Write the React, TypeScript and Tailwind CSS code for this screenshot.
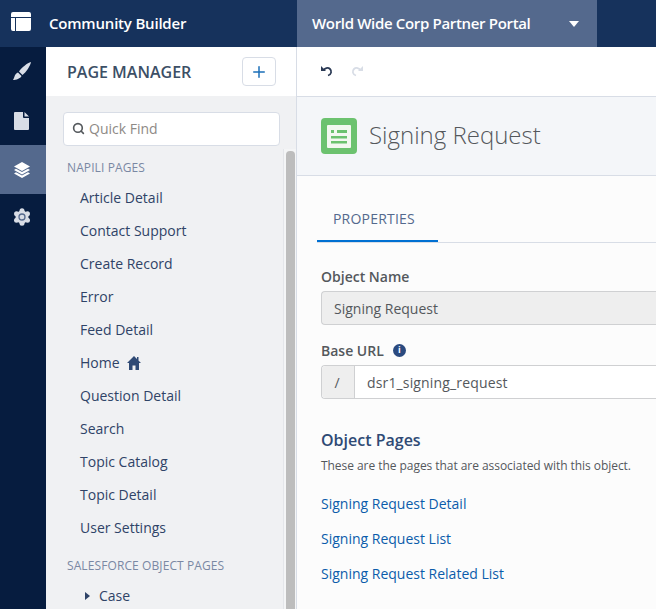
import { Plus, Search } from "lucide-react";

const napiliPages = ["Article Detail", "Contact Support", "Create Record", "Error", "Feed Detail", "Home", "Question Detail", "Search", "Topic Catalog", "Topic Detail", "User Settings"];

function Header() {
  return (
    <header className="flex h-[47px] shrink-0 bg-[#16325c] text-white">
      <div className="flex w-[49px] items-center pb-[4px] pl-[11px]">
        <svg width="20" height="19" viewBox="0 0 20 19" fill="#fff">
          <path d="M2 0h16a2 2 0 0 1 2 2v3H0V2a2 2 0 0 1 2-2zM0 6h4v13H2a2 2 0 0 1-2-2zM5 6h15v11a2 2 0 0 1-2 2H5z" />
        </svg>
      </div>
      <div className="w-[248px] self-center text-[15px] font-semibold tracking-[-0.2px]">Community Builder</div>
      <div className="flex w-[300px] items-center justify-between bg-[#54698d] pl-[15px] pr-[18px]">
        <span className="text-[15px] font-semibold tracking-[-0.33px]">World Wide Corp Partner Portal</span>
        <span className="h-0 w-0 border-x-[5px] border-t-[6px] border-x-transparent border-t-white" />
      </div>
    </header>
  );
}

function Rail() {
  return (
    <nav className="flex w-[46px] shrink-0 flex-col bg-[#061c3f]">
      <div className="flex h-[49px] items-center justify-center pb-[2px] pr-[2px]">
        <svg width="18" height="18" viewBox="0 0 18 18" fill="#d8dde6">
          <path d="M18 0C17.500 3.500 13 10.500 9.500 13L6 9.500C8.500 6 14.500 .5 18 0zM5 10.500l3.500 3.500C7.500 16.500 3 18 0 18c.5-1 1-2 1.500-3.500C2 12.500 3.500 11 5 10.500z" />
        </svg>
      </div>
      <div className="flex h-[49px] items-center justify-center pr-[3px]">
        <svg width="15" height="18" viewBox="0 0 15 18" fill="#d8dde6">
          <path d="M0 1a1 1 0 0 1 1-1h8v5a1 1 0 0 0 1 1h5v11a1 1 0 0 1-1 1H1a1 1 0 0 1-1-1zM10.500 0 15 4.600h-4.500z" />
        </svg>
      </div>
      <div className="flex h-[49px] items-center justify-center bg-[#54698d] pr-[3px]">
        <svg width="16" height="16" viewBox="0 0 16 16" fill="#fff">
          <path d="M8 0l8 4.500L8 9 0 4.500zM0 8l2-1.200L8 10l6-3.200L16 8l-8 4.500zM0 11.500l2-1.200 6 3.200 6-3.200 2 1.200L8 16z" />
        </svg>
      </div>
      <div className="flex h-[49px] items-center justify-center pb-[3px] pr-[3px]">
        <svg width="18" height="18" viewBox="0 0 18 18" fill="#d8dde6">
          <circle cx="9" cy="9" r="6.500" />
          <circle cx="9" cy="2.700" r="2.500" />
          <circle cx="9" cy="15.300" r="2.500" />
          <circle cx="3.540" cy="5.850" r="2.500" />
          <circle cx="14.460" cy="5.850" r="2.500" />
          <circle cx="3.540" cy="12.150" r="2.500" />
          <circle cx="14.460" cy="12.150" r="2.500" />
          <circle cx="9" cy="9" r="3" fill="none" stroke="#54698d" strokeWidth="1.300" />
        </svg>
      </div>
    </nav>
  );
}

function PagesPanel() {
  return (
    <aside className="flex w-[251px] shrink-0 flex-col border-r border-[#d8dde6] bg-[#f0f1f3]">
      <div className="flex h-[49px] shrink-0 items-center justify-between bg-white pl-[21px] pr-[20px]">
        <h2 className="text-[16px] font-semibold text-[#3c4f66]">PAGE MANAGER</h2>
        <button className="flex h-[29px] w-[34px] items-center justify-center rounded-[4px] border border-[#d8dde6] bg-white text-[#1b6fb8]">
          <Plus size={18} />
        </button>
      </div>
      <div className="relative min-h-0 flex-1 overflow-hidden">
        <div className="pl-[17px] pr-[16px] pt-[16px]">
          <div className="flex h-[34px] items-center gap-[4px] rounded-[4px] border border-[#d8dde6] bg-white pb-[2px] pl-[8px] text-[14px] text-[#8e8a86]">
            <Search size={13} strokeWidth={3} className="text-[#54585c]" />
            Quick Find
          </div>
        </div>
        <div className="pl-[21px] pt-[13px] text-[12px] leading-[18px] tracking-[0.1px] text-[#7a88a3]">NAPILI PAGES</div>
        <ul className="pt-[4px] text-[14px] text-[#2f4367]">
          {napiliPages.map((page) => (
            <li key={page} className="flex h-[33px] items-center gap-[7px] pl-[34px]">
              {page}
              {page === "Home" && (
                <svg width="14" height="14" viewBox="0 0 14 14" fill="#2f4a75">
                  <path d="M7 0 0 7h2v7h3.500V9.500h3V14H12V7h2l-2.500-2.500V1H10v2z" />
                </svg>
              )}
            </li>
          ))}
        </ul>
        <div className="pl-[21px] pt-[13px] text-[12px] leading-[18px] tracking-[0.1px] text-[#7a88a3]">SALESFORCE OBJECT PAGES</div>
        <div className="mt-[10px] flex items-center gap-[9px] pl-[39px] text-[14px] text-[#2f4367]">
          <span className="h-0 w-0 border-y-[4px] border-l-[5px] border-y-transparent border-l-[#2f4367]" />
          Case
        </div>
        <div className="absolute bottom-0 right-0 top-[53px] w-[13px] border-l border-[#e4e6ea] bg-[#f4f5f6] pl-[2px]">
          <div className="mt-[2px] h-full w-[9px] rounded-t-[4px] bg-[#bdbdbd]" />
        </div>
      </div>
    </aside>
  );
}

function MainPane() {
  return (
    <main className="min-w-0 flex-1 bg-[#fcfcfc]">
      <div className="flex h-[50px] items-center gap-[18px] border-b border-[#d8dde6] bg-white pb-[1px] pl-[24px]">
        <svg width="12" height="12" viewBox="0 0 12 12" fill="#2b3a55">
          <path d="M0 1v5h5z" />
          <path d="M2.500 5.500C3.500 3 7 2 9 4c2 2 1.500 5.500-2 6.500" fill="none" stroke="#2b3a55" strokeWidth="1.800" />
        </svg>
        <svg width="12" height="12" viewBox="0 0 12 12" fill="#d8dde6">
          <path d="M12 1v5H7z" />
          <path d="M9.500 5.500C8.500 3 5 2 3 4c-2 2-1.500 5.500 2 6.500" fill="none" stroke="#d8dde6" strokeWidth="1.800" />
        </svg>
      </div>
      <div className="flex h-[79px] items-center gap-[12px] border-b border-[#d8dde6] bg-[#f4f6f9] pl-[24px]">
        <div className="flex h-[36px] w-[36px] items-center justify-center rounded-[4px] bg-[#6cc26f]">
          <svg width="24" height="23" viewBox="0 0 24 23">
            <rect width="24" height="23" rx="1" fill="#f3f8f0" />
            <path d="M4 5h3v3H4zM10 5h10v3H10zM4 11h16v2.500H4zM4 16h16v2.500H4z" fill="#6cc26f" />
          </svg>
        </div>
        <h1 className="pb-[2px] text-[24px] font-light text-[#54585c]">Signing Request</h1>
      </div>
      <div className="pl-[20px] pt-[28px]">
        <div className="border-b border-[#d8dde6]">
          <div className="h-[38px] w-[121px] border-b-2 border-[#0070d2] pl-[16px] text-[14px] leading-[30px] tracking-[0.2px] text-[#54698d]">PROPERTIES</div>
        </div>
        <div className="pl-[4px]">
          <label className="mt-[24px] block text-[14px] font-semibold leading-[20px] text-[#54585c]">Object Name</label>
          <div className="mt-[4px] flex h-[34px] items-center rounded-l-[4px] border border-r-0 border-[#cfd0d2] bg-[#eeeeee] pl-[12px] text-[14px] text-[#54585c]">Signing Request</div>
          <div className="mt-[15px] flex h-[20px] items-center gap-[9px]">
            <label className="text-[14px] font-semibold text-[#54585c]">Base URL</label>
            <span className="flex h-[13px] w-[13px] items-center justify-center rounded-full bg-[#2a4a7f] text-[9px] font-bold text-white">i</span>
          </div>
          <div className="mt-[5px] flex h-[34px] rounded-l-[4px] border border-r-0 border-[#cfd0d2] bg-white text-[14px] text-[#54585c]">
            <span className="flex w-[33px] items-center justify-center rounded-l-[4px] border-r border-[#cfd0d2] bg-[#eeeeee] pr-[2px]">/</span>
            <span className="flex items-center pl-[12px] tracking-[0.15px]">dsr1_signing_request</span>
          </div>
          <h3 className="mt-[30px] text-[16px] font-semibold leading-[22px] text-[#2f4a75]">Object Pages</h3>
          <p className="mt-[7px] text-[12px] leading-[16px] tracking-[-0.05px] text-[#54585c]">These are the pages that are associated with this object.</p>
          <ul className="mt-[12px] text-[14px] text-[#0b5cab]">
            <li className="flex h-[35px] items-center">Signing Request Detail</li>
            <li className="flex h-[35px] items-center">Signing Request List</li>
            <li className="flex h-[35px] items-center">Signing Request Related List</li>
          </ul>
        </div>
      </div>
    </main>
  );
}

export default function App() {
  return (
    <div className="flex h-[609px] w-[656px] flex-col overflow-hidden font-['Open_Sans',sans-serif]">
      <Header />
      <div className="flex min-h-0 flex-1">
        <Rail />
        <PagesPanel />
        <MainPane />
      </div>
    </div>
  );
}
